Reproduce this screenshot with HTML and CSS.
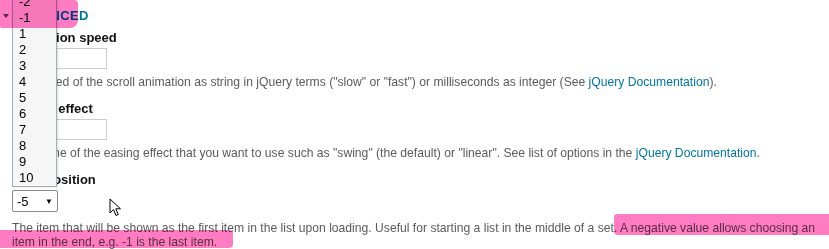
FILE: index.html
```html
<!DOCTYPE html>
<html>
<head>
<meta charset="utf-8">
<link rel="stylesheet" href="styles.css">
</head>
<body>
<div class="page">
  <div class="section-head">
    <span class="toggle"></span>
    <h3 class="section-title">Advanced</h3>
  </div>

  <div class="field">
    <label class="field-label">Animation speed</label>
    <input class="text-input" type="text">
    <p class="desc">The speed of the scroll animation as string in jQuery terms ("slow" or "fast") or milliseconds as integer (See <a href="#">jQuery Documentation</a>).</p>
  </div>

  <div class="field">
    <label class="field-label">Easing effect</label>
    <input class="text-input" type="text">
    <p class="desc">The name of the easing effect that you want to use such as "swing" (the default) or "linear". See list of options in the <a href="#">jQuery Documentation</a>.</p>
  </div>

  <div class="field">
    <label class="field-label">Start position</label>
    <div class="select-box"><span>-5</span><span class="arrow">&#9660;</span></div>
    <p class="desc desc-last">The item that will be shown as the first item in the list upon loading. Useful for starting a list in the middle of a set. A negative value allows choosing an item in the end, e.g. -1 is the last item.</p>
  </div>

  <ul class="dropdown">
    <li>-2</li><li>-1</li><li>1</li><li>2</li><li>3</li><li>4</li>
    <li>5</li><li>6</li><li>7</li><li>8</li><li>9</li><li>10</li>
  </ul>

  <svg class="cursor" width="14" height="20" viewBox="0 0 14 20">
    <path d="M1 1 L1 15 L4.5 11.5 L7 17.5 L9.3 16.5 L6.8 10.8 L11.5 10.8 Z" fill="#fff" stroke="#000" stroke-width="1" stroke-linejoin="round"/>
  </svg>

  <div class="marker m1"></div>
  <div class="marker m2"></div>
  <div class="marker m3"></div>
</div>
</body>
</html>
```
FILE: styles.css
```css
html, body {
  margin: 0;
  padding: 0;
  background: #fff;
}
body {
  font-family: "Liberation Sans", Arial, sans-serif;
  width: 829px;
  height: 249px;
  overflow: hidden;
}
.page {
  position: relative;
  padding: 8px 0 0 12px;
  width: 820px;
}
.section-head {
  display: flex;
  align-items: center;
  height: 16px;
  margin-left: -9px;
}
.toggle {
  width: 0;
  height: 0;
  border-left: 3px solid transparent;
  border-right: 3px solid transparent;
  border-top: 4px solid #555;
  margin-right: 4px;
  margin-top: -1px;
}
.section-title {
  margin: 0;
  font-size: 13px;
  line-height: 16px;
  font-weight: bold;
  text-transform: uppercase;
  letter-spacing: 0.4px;
  color: #0074a2;
}
.field {
  display: flex;
  flex-direction: column;
  align-items: flex-start;
}
.field-label {
  font-size: 13px;
  line-height: 16px;
  font-weight: bold;
  color: #111;
  margin-top: 6px;
  margin-bottom: 2px;
}
.field + .field .field-label {
  margin-top: 12px;
}
.text-input {
  box-sizing: border-box;
  width: 95px;
  height: 21px;
  border: 1px solid #ccc;
  margin: 0;
  padding: 0 4px;
  background: #fff;
}
.desc {
  margin: 6px 0 0 0;
  font-size: 12.15px;
  line-height: 14px;
  color: #5a5a5a;
  width: 812px;
}
.desc a {
  color: #0074a2;
  text-decoration: none;
}
.select-box {
  box-sizing: border-box;
  width: 46px;
  height: 22px;
  border: 1px solid #888;
  border-radius: 2px;
  display: flex;
  align-items: center;
  justify-content: space-between;
  padding: 0 4px 0 4px;
  font-size: 13px;
  color: #000;
}
.select-box .arrow {
  font-size: 8px;
}
.desc-last {
  margin-top: 9px;
}
.dropdown {
  position: absolute;
  left: 12px;
  top: -6px;
  width: 45px;
  box-sizing: border-box;
  margin: 0;
  padding: 0;
  list-style: none;
  background: #f6f6f6;
  border-left: 1px solid #a6adba;
  border-right: 1px solid #a6adba;
  border-bottom: 1px solid #a6adba;
  box-shadow: 1px 0 2px rgba(0,0,0,0.15);
}
.dropdown li {
  height: 16px;
  line-height: 16px;
  font-size: 13px;
  padding-left: 6px;
  color: #000;
}
.cursor {
  position: absolute;
  left: 109px;
  top: 198px;
}
.marker {
  position: absolute;
  background: #ff7cc2;
  mix-blend-mode: multiply;
}
.m1 {
  left: 0;
  top: 0;
  width: 78px;
  height: 28px;
  border-radius: 0 4px 8px 2px;
}
.m2 {
  left: 614px;
  top: 214px;
  width: 215px;
  height: 21px;
  border-radius: 3px 0 0 4px;
}
.m3 {
  left: 0;
  top: 230px;
  width: 233px;
  height: 18px;
  border-radius: 0 4px 4px 0;
}
```
